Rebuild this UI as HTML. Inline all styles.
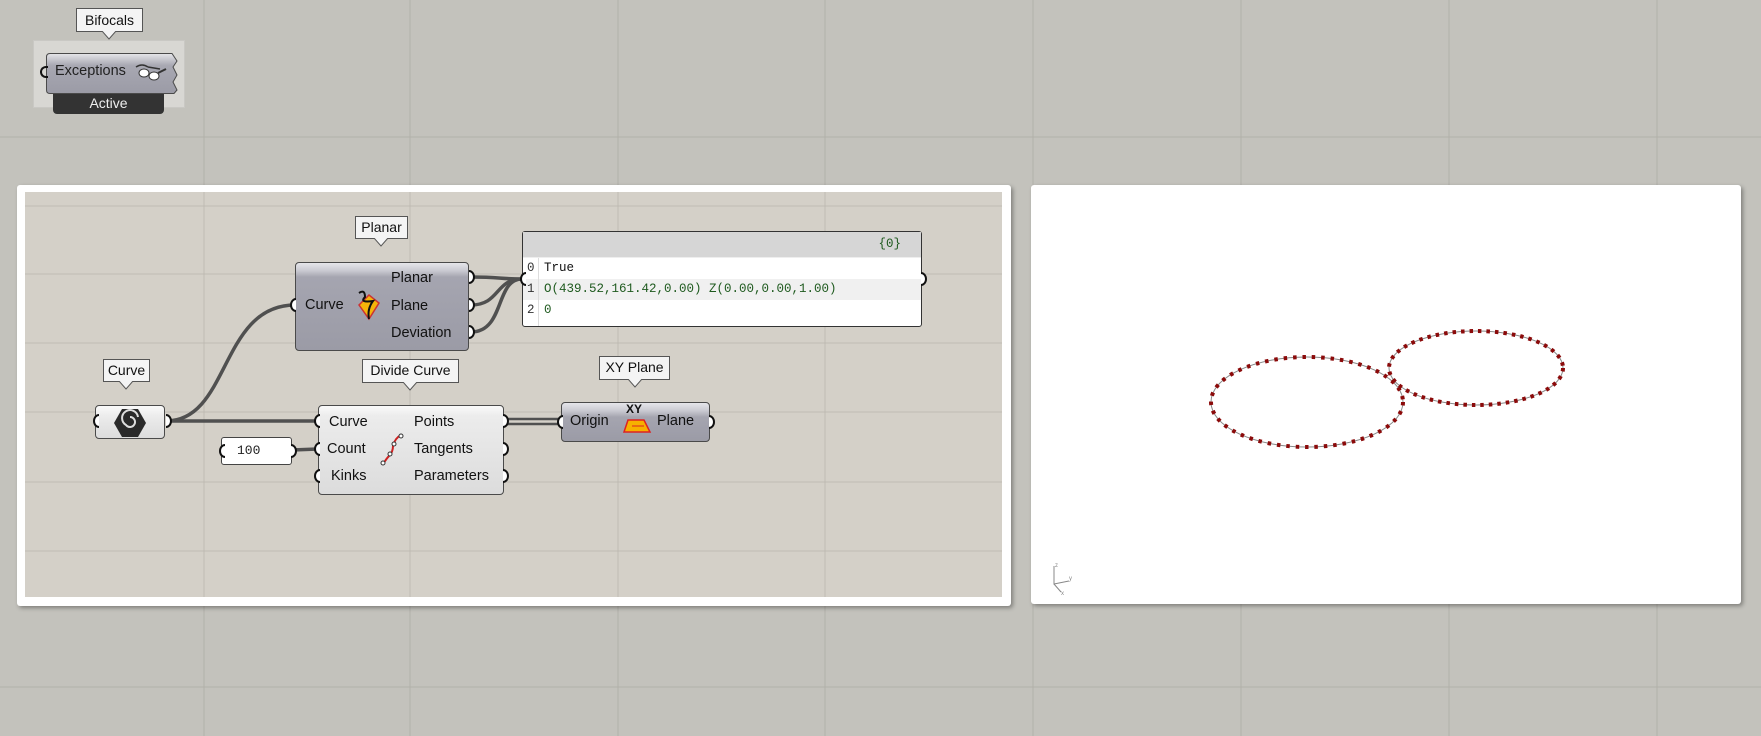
<!DOCTYPE html>
<html style="width:1761px;height:736px;overflow:hidden"><head><meta charset="utf-8"><style>
*{margin:0;padding:0;box-sizing:border-box}
body{width:1761px;height:736px;overflow:hidden;background:#c3c2bc;font-family:"Liberation Sans",sans-serif;position:relative}
.abs{position:absolute}
.tip{position:absolute;background:#f4f4f4;border:1px solid #555;font-size:14px;color:#111;text-align:center;line-height:20px}
.comp{position:absolute;border:1px solid #4a4a4a;border-radius:4px;background:linear-gradient(#e6e6ea 0,#c8c8d0 8px,#a5a5b0 14px,#9b9ba6 100%);font-size:14.5px;color:#111}
.light{background:linear-gradient(#fafafa 0,#ececec 10px,#dcdcdc 100%)}
.t{position:absolute;white-space:nowrap}
</style></head><body>
<svg class="abs" style="left:0;top:0" width="1761" height="736">
<g stroke="#b2b1aa" stroke-width="1">
<line x1="204" y1="0" x2="204" y2="736"/><line x1="410" y1="0" x2="410" y2="736"/><line x1="618" y1="0" x2="618" y2="736"/><line x1="825" y1="0" x2="825" y2="736"/><line x1="1033" y1="0" x2="1033" y2="736"/><line x1="1241" y1="0" x2="1241" y2="736"/><line x1="1449" y1="0" x2="1449" y2="736"/><line x1="1657" y1="0" x2="1657" y2="736"/>
<line x1="0" y1="137" x2="1761" y2="137"/><line x1="0" y1="687" x2="1761" y2="687"/>
</g></svg>
<!-- group -->
<div class="abs" style="left:33px;top:40px;width:152px;height:68px;background:#d8d7d3;border:1px solid #c9c8c4"></div>
<div class="tip" style="left:76px;top:8px;width:67px;height:24px;line-height:22px">Bifocals</div>
<svg class="abs" style="left:102px;top:31px" width="16" height="10"><path d="M0 0 L7 8 L14 0" fill="#f4f4f4" stroke="#555"/></svg>
<div class="abs" style="left:53px;top:90px;width:111px;height:24px;background:#333;border-radius:0 0 4px 4px;color:#eee;font-size:14px;text-align:center;line-height:26px">Active</div>
<svg class="abs" style="left:46px;top:53px" width="134" height="41"><defs><linearGradient id="g1" x1="0" y1="0" x2="0" y2="1"><stop offset="0" stop-color="#e6e6ea"/><stop offset="0.3" stop-color="#a8a8b2"/><stop offset="1" stop-color="#9b9ba6"/></linearGradient></defs>
<path d="M4 0.5 L126 0.5 L131 8 L127 14 L131 22 L127 29 L131 37 L128 40.5 L4 40.5 Q0.5 40.5 0.5 37 L0.5 4 Q0.5 0.5 4 0.5Z" fill="url(#g1)" stroke="#4a4a4a"/></svg>
<div class="abs" style="left:46px;top:53px;width:128px;height:40px;font-size:14.5px"><span class="t" style="left:9px;top:10px;color:#222">Exceptions</span>
<svg class="abs" style="left:88px;top:8px" width="34" height="22"><path d="M2 6 Q8 2 14 6 M14 6 L26 8" stroke="#333" fill="none" stroke-width="1.5"/><ellipse cx="10" cy="12" rx="5" ry="4" fill="#fff" stroke="#333"/><ellipse cx="20" cy="15" rx="5" ry="4" fill="#fff" stroke="#333"/><path d="M24 12 L32 8" stroke="#333" stroke-width="2"/></svg></div>
<div class="abs" style="left:40px;top:66px;width:8px;height:12px;border:2px solid #111;border-radius:6px 0 0 6px;border-right:none"></div>

<!-- left panel -->
<div class="abs" style="left:17px;top:185px;width:994px;height:421px;background:#fff;border-radius:3px;box-shadow:2px 2px 4px rgba(0,0,0,.35)"></div>
<div class="abs" style="left:25px;top:192px;width:977px;height:405px;background:#d4d0c8;overflow:hidden">
<svg class="abs" style="left:-25px;top:-192px" width="1030" height="600"><g stroke="#bfbbb3" stroke-width="1">
<line x1="204" y1="0" x2="204" y2="600"/><line x1="410" y1="0" x2="410" y2="600"/><line x1="618" y1="0" x2="618" y2="600"/><line x1="825" y1="0" x2="825" y2="600"/>
<line x1="0" y1="206" x2="1030" y2="206"/><line x1="0" y1="274" x2="1030" y2="274"/><line x1="0" y1="343" x2="1030" y2="343"/><line x1="0" y1="412" x2="1030" y2="412"/><line x1="0" y1="482" x2="1030" y2="482"/><line x1="0" y1="551" x2="1030" y2="551"/></g></svg>
</div>
<!-- wires -->
<svg class="abs" style="left:0;top:0" width="1020" height="620">
<g fill="none" stroke="#505050" stroke-width="3.5">
<path d="M166 421 C230 421 220 305 295 305"/>
<path d="M166 421 L318 421"/>
<path d="M292 450 L318 449"/>
<path d="M471 277 C500 277 500 279 522 279"/>
<path d="M471 305 C500 305 495 279 522 279"/>
<path d="M471 332 C505 332 495 279 522 279"/>
</g>
<path d="M505 419 L561 419 M505 424 L561 424" stroke="#505050" stroke-width="2.5"/>
</svg>

<!-- Planar -->
<div class="tip" style="left:355px;top:216px;width:53px;height:23px">Planar</div>
<svg class="abs" style="left:374px;top:238px" width="16" height="10"><path d="M0 0 L7 8 L14 0" fill="#f4f4f4" stroke="#555"/></svg>
<div class="comp" style="left:295px;top:262px;width:174px;height:89px">
<span class="t" style="left:9px;top:34px">Curve</span>
<span class="t" style="left:95px;top:7px">Planar</span><span class="t" style="left:95px;top:35px">Plane</span><span class="t" style="left:95px;top:62px">Deviation</span>
<svg class="abs" style="left:57px;top:26px" width="30" height="34"><path d="M6 16 L16 6 L26 14 L16 30Z" fill="#f5b40a" stroke="#c33" stroke-width="1.5"/><path d="M6 4 Q12 0 12 8 Q6 14 20 12 Q14 20 16 30" stroke="#111" stroke-width="2" fill="none"/></svg>
</div>
<!-- Panel -->
<div class="abs" style="left:522px;top:231px;width:400px;height:96px;background:#fff;border:1px solid #333;border-radius:3px;font-family:'Liberation Mono',monospace;font-size:12.5px;color:#1e5a1e">
<div class="abs" style="left:0;top:0;width:398px;height:26px;background:#d6d6d6;border-bottom:1px solid #eee"><span class="t" style="right:20px;top:5px">{0}</span></div>
<div class="abs" style="left:0;top:47px;width:398px;height:21px;background:#f0f0f0"></div>
<div class="abs" style="left:15px;top:26px;width:1px;height:68px;background:#ddd"></div>
<span class="t" style="left:4px;top:29px;color:#333">0</span><span class="t" style="left:21px;top:29px;color:#111">True</span>
<span class="t" style="left:4px;top:50px;color:#333">1</span><span class="t" style="left:21px;top:50px">O(439.52,161.42,0.00) Z(0.00,0.00,1.00)</span>
<span class="t" style="left:4px;top:71px;color:#333">2</span><span class="t" style="left:21px;top:71px">0</span>
</div>
<!-- Curve param -->
<div class="tip" style="left:103px;top:359px;width:47px;height:23px">Curve</div>
<svg class="abs" style="left:119px;top:381px" width="16" height="10"><path d="M0 0 L7 8 L14 0" fill="#f4f4f4" stroke="#555"/></svg>
<div class="comp light" style="left:95px;top:405px;width:70px;height:34px">
<svg class="abs" style="left:17px;top:2px" width="34" height="30"><path d="M9 1 L25 1 L33 15 L25 29 L9 29 L1 15Z" fill="#2a2a2a"/><path d="M17 9 a5 5 0 1 1 -4 8 a8 8 0 1 1 12 -8" stroke="#ddd" stroke-width="2" fill="none"/></svg></div>
<!-- Divide curve -->
<div class="tip" style="left:362px;top:359px;width:97px;height:24px">Divide Curve</div>
<svg class="abs" style="left:403px;top:382px" width="16" height="10"><path d="M0 0 L7 8 L14 0" fill="#f4f4f4" stroke="#555"/></svg>
<div class="comp light" style="left:318px;top:405px;width:186px;height:90px">
<span class="t" style="left:10px;top:8px">Curve</span><span class="t" style="left:8px;top:35px">Count</span><span class="t" style="left:12px;top:62px">Kinks</span>
<span class="t" style="left:95px;top:8px">Points</span><span class="t" style="left:95px;top:35px">Tangents</span><span class="t" style="left:95px;top:62px">Parameters</span>
<svg class="abs" style="left:60px;top:26px" width="26" height="36"><path d="M4 32 Q8 26 10 24 Q14 20 14 14 Q16 6 22 3" stroke="#c22" stroke-width="2" fill="none"/><circle cx="4" cy="31" r="2" fill="#fff" stroke="#333"/><circle cx="11" cy="22" r="2" fill="#fff" stroke="#333"/><circle cx="15" cy="12" r="2" fill="#fff" stroke="#333"/><circle cx="22" cy="4" r="2" fill="#fff" stroke="#333"/></svg>
</div>
<div class="abs" style="left:221px;top:437px;width:71px;height:28px;background:#fff;border:1px solid #444;border-radius:3px;font-family:'Liberation Mono',monospace;font-size:13px;line-height:26px;padding-left:15px;color:#222">100</div>
<!-- XY plane -->
<div class="tip" style="left:599px;top:356px;width:71px;height:24px">XY Plane</div>
<svg class="abs" style="left:628px;top:379px" width="16" height="10"><path d="M0 0 L7 8 L14 0" fill="#f4f4f4" stroke="#555"/></svg>
<div class="comp" style="left:561px;top:402px;width:149px;height:40px">
<span class="t" style="left:8px;top:10px">Origin</span><span class="t" style="left:95px;top:10px">Plane</span>
<span class="t" style="left:64px;top:-1px;font-size:12px;font-weight:bold">XY</span>
<svg class="abs" style="left:60px;top:15px" width="30" height="16"><path d="M6 2 L22 2 L28 14 L2 14Z" fill="#f7b000" stroke="#d22" stroke-width="1.5"/><path d="M10 8 L22 8" stroke="#d22"/></svg>
</div>
<!-- grips -->
<svg class="abs" style="left:0;top:0" width="1020" height="620"><g fill="#fff" stroke="#111" stroke-width="2">
<path d="M99 415 a5 6 0 0 0 0 12"/><path d="M166 415 a5 6 0 0 1 0 12"/>
<path d="M296 299 a5 6 0 0 0 0 12"/>
<path d="M469 271 a5 6 0 0 1 0 12"/><path d="M469 299 a5 6 0 0 1 0 12"/><path d="M469 326 a5 6 0 0 1 0 12"/>
<path d="M526 273 a5 6 0 0 0 0 12"/><path d="M921 273 a5 6 0 0 1 0 12"/>
<path d="M320 415 a5 6 0 0 0 0 12"/><path d="M320 443 a5 6 0 0 0 0 12"/><path d="M320 470 a5 6 0 0 0 0 12"/>
<path d="M503 415 a5 6 0 0 1 0 12"/><path d="M503 443 a5 6 0 0 1 0 12"/><path d="M503 470 a5 6 0 0 1 0 12"/>
<path d="M225 445 a5 6 0 0 0 0 12"/><path d="M291 445 a5 6 0 0 1 0 12"/>
<path d="M563 416 a5 6 0 0 0 0 12"/><path d="M709 416 a5 6 0 0 1 0 12"/>
</g></svg>

<!-- viewport -->
<div class="abs" style="left:1031px;top:185px;width:710px;height:419px;background:#fff;border-radius:3px;box-shadow:2px 2px 4px rgba(0,0,0,.35)"></div>
<svg class="abs" style="left:1031px;top:185px" width="710" height="419">
<ellipse cx="276" cy="217" rx="96" ry="45" fill="none" stroke="#888" stroke-width="1"/>
<ellipse cx="445" cy="183" rx="87" ry="37" fill="none" stroke="#888" stroke-width="1"/>
<ellipse cx="276" cy="217" rx="96" ry="45" fill="none" stroke="#8b0a0a" stroke-width="4" stroke-dasharray="3.5 5.9"/>
<ellipse cx="445" cy="183" rx="87" ry="37" fill="none" stroke="#8b0a0a" stroke-width="4" stroke-dasharray="3.5 5"/>
<g stroke="#888" stroke-width="1" fill="none"><path d="M23 381 L23 399 L38 396 M23 399 L30 407"/></g>
<text x="24" y="382" font-size="6" fill="#888">z</text><text x="38" y="395" font-size="6" fill="#888">y</text><text x="30" y="410" font-size="6" fill="#888">x</text>
</svg>
</body></html>
